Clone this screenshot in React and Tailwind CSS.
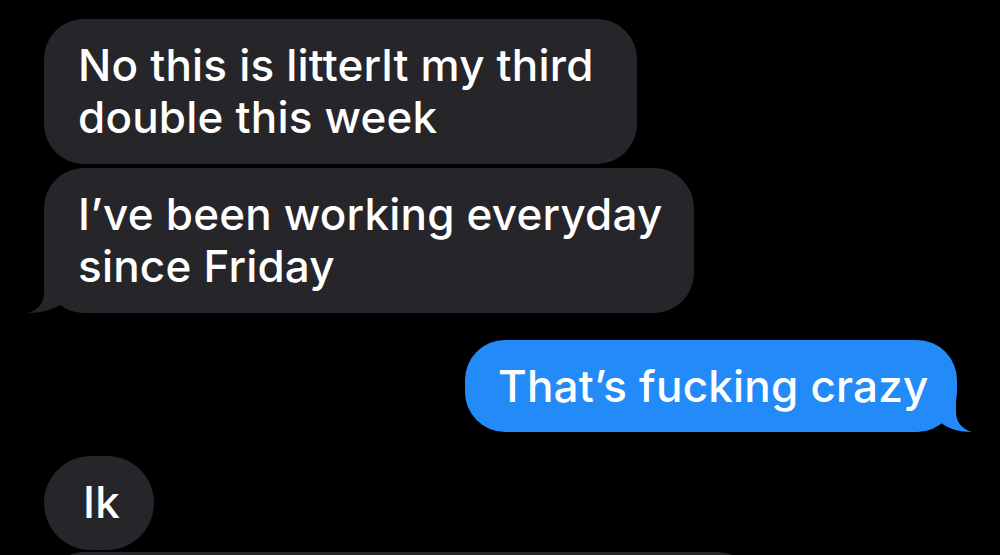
import React from 'react'

const GRAY = '#262529'
const BLUE = '#228bf8'

function TailLeft() {
  return (
    <svg className="absolute left-[-16px] bottom-0" width="64" height="40" viewBox="0 0 64 40">
      <path d="M16 0 L16 20 C16 30 10 37 0 40 C12 40 24 37 32 32 C40 38 50 40 64 40 L64 0 Z" fill={GRAY} />
    </svg>
  )
}

function TailRight() {
  return (
    <svg className="absolute right-[-15px] bottom-0" width="64" height="40" viewBox="0 0 64 40">
      <path d="M48 0 L48 20 C48 30 54 37 64 40 C52 40 40 37 32 30 C24 38 14 40 0 40 L0 0 Z" fill={BLUE} />
    </svg>
  )
}

function Bubble({ me, tail, className = '', children }) {
  return (
    <div
      className={`relative shrink-0 rounded-[40px] py-5 text-white text-[44px] tracking-[0.2px] font-medium leading-[52px] whitespace-nowrap ${me ? 'bg-[#228bf8] self-end' : 'bg-[#262529] self-start'} ${className}`}
    >
      {tail && (me ? <TailRight /> : <TailLeft />)}
      <span className="relative">{children}</span>
    </div>
  )
}

export default function App() {
  return (
    <div
      className="w-[1000px] h-[555px] overflow-hidden bg-black flex flex-col pt-[19px] pl-[44px] pr-[43px]"
      style={{ fontFamily: 'Inter, "Open Sans", sans-serif' }}
    >
      <Bubble className="w-[593px] h-[145px] pl-[34px]">
        No this is litterlt my third<br />double this week
      </Bubble>
      <Bubble tail className="w-[650px] h-[145px] pl-[34px] mt-[4px]">
        I’ve been working everyday<br />since Friday
      </Bubble>
      <Bubble me tail className="w-[492px] h-[92px] pl-[33px] mt-[27px]">
        That’s fucking crazy
      </Bubble>
      <Bubble className="w-[110px] h-[94px] rounded-full pl-[39px] mt-[24px]">
        Ik
      </Bubble>
      <Bubble className="w-[713px] mt-[2px] h-[100px]">
        {' '}
      </Bubble>
    </div>
  )
}
